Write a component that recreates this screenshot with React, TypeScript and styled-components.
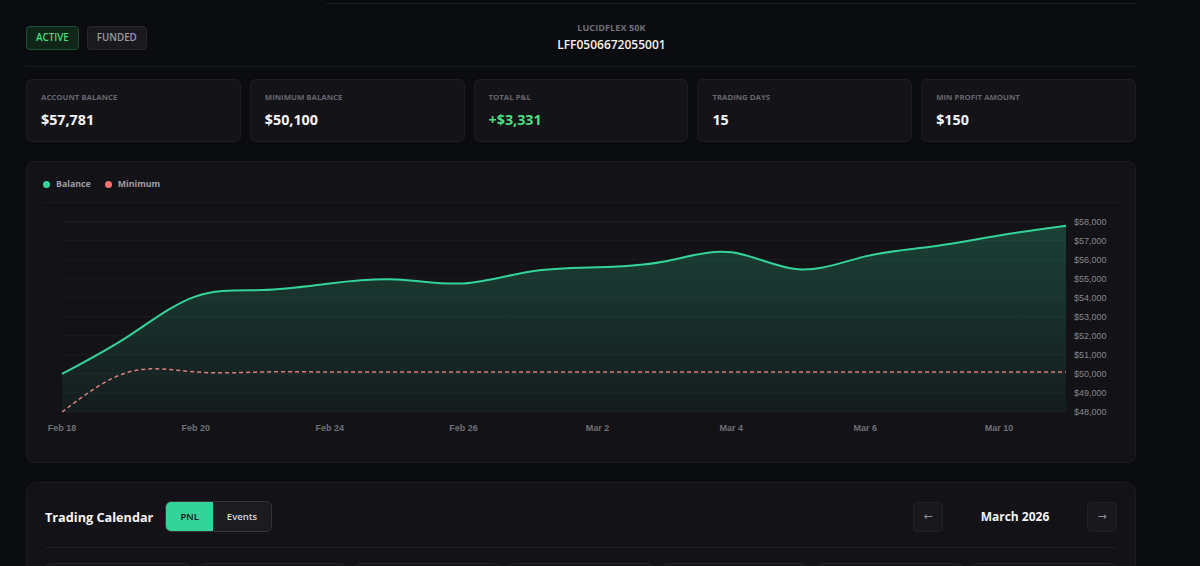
import React from 'react';
import styled, { createGlobalStyle } from 'styled-components';

const GlobalStyle = createGlobalStyle`
  * { box-sizing: border-box; }
  html, body {
    margin: 0;
    background: #0b0c10;
  }
  body {
    font-family: 'Open Sans', 'Noto Sans', sans-serif;
    color: #f4f4f5;
    overflow: hidden;
  }
`;

const Page = styled.div`
  width: 1136px;
  padding-left: 26px;
`;

const TopRule = styled.div`
  height: 4px;
  background: linear-gradient(to right, transparent 27%, #1a1b20 27%) bottom / 100% 1px no-repeat;
`;

const Header = styled.header`
  display: flex;
  align-items: center;
  justify-content: space-between;
  padding: 18px 0 13px;
  border-bottom: 1px solid #17181d;
`;

const BadgeGroup = styled.div`
  display: flex;
  gap: 8px;
`;

const Badge = styled.span<{ $active?: boolean }>`
  display: inline-flex;
  align-items: center;
  height: 24px;
  padding: 0 9px;
  border-radius: 4px;
  font-size: 9.8px;
  font-weight: 600;
  background: ${p => (p.$active ? '#0f2619' : '#1a1a1e')};
  border: 1px solid ${p => (p.$active ? '#1d5134' : '#26262b')};
  color: ${p => (p.$active ? '#4ade80' : '#9b9ba1')};
`;

const TitleBlock = styled.div`
  display: flex;
  flex-direction: column;
  align-items: center;
  gap: 3px;
`;

const AccountType = styled.div`
  font-size: 9px;
  line-height: 12px;
  font-weight: 700;
  letter-spacing: 0.1px;
  color: #707076;
`;

const AccountId = styled.div`
  font-size: 12px;
  line-height: 16px;
  font-weight: 600;
  color: #f4f4f5;
`;

const HeaderSpacer = styled.div`
  width: 60px;
`;

const StatRow = styled.section`
  display: grid;
  grid-template-columns: repeat(5, 1fr);
  gap: 9px;
  margin-top: 12px;
`;

const StatCard = styled.div`
  background: #141418;
  border: 1px solid #1c1c21;
  border-radius: 6px;
  padding: 12px 14px 11px;
  display: flex;
  flex-direction: column;
  gap: 8px;
`;

const StatLabel = styled.div`
  font-size: 7.8px;
  line-height: 10px;
  font-weight: 700;
  text-transform: uppercase;
  color: #66666d;
`;

const StatValue = styled.div<{ $positive?: boolean }>`
  font-size: 14.3px;
  line-height: 20px;
  font-weight: 700;
  color: ${p => (p.$positive ? '#4ade80' : '#f7f7f8')};
`;

const ChartCard = styled.section`
  margin-top: 19px;
  background: #131317;
  border: 1px solid #1c1c21;
  border-radius: 8px;
  padding: 17px 16px 15px;
`;

const Legend = styled.div`
  display: flex;
  align-items: center;
  gap: 14px;
  height: 10px;
  margin-bottom: 8px;
`;

const LegendItem = styled.div`
  display: flex;
  align-items: center;
  gap: 6px;
  font-size: 8.8px;
  font-weight: 700;
  color: #9d9da4;
`;

const Dot = styled.span<{ $color: string }>`
  width: 7px;
  height: 7px;
  border-radius: 50%;
  background: ${p => p.$color};
`;

const ChartSvg = styled.svg`
  display: block;
`;

const CalendarCard = styled.section`
  margin-top: 19px;
  background: #131317;
  border: 1px solid #1c1c21;
  border-radius: 10px;
  padding: 18px 18px 0;
`;

const CalendarHeader = styled.div`
  display: flex;
  align-items: center;
  justify-content: space-between;
  padding-bottom: 15px;
  border-bottom: 1px solid #1d1d22;
`;

const HeaderLeft = styled.div`
  display: flex;
  align-items: center;
  gap: 12px;
`;

const CalendarTitle = styled.h2`
  margin: 0;
  font-size: 12.7px;
  font-weight: 700;
  color: #f7f7f8;
`;

const Toggle = styled.div`
  display: flex;
  height: 31px;
  border: 1px solid #34343a;
  border-radius: 6px;
  overflow: hidden;
  background: #1c1c20;
`;

const ToggleButton = styled.button<{ $active?: boolean }>`
  border: none;
  padding: 0 14px;
  font-family: inherit;
  font-size: 9.5px;
  font-weight: 600;
  background: ${p => (p.$active ? '#34d399' : 'transparent')};
  color: ${p => (p.$active ? '#0b1510' : '#d4d4d8')};
`;

const MonthNav = styled.div`
  display: flex;
  align-items: center;
`;

const NavButton = styled.button`
  width: 30px;
  height: 30px;
  border: 1px solid #1f1f24;
  border-radius: 4px;
  background: #19191d;
  color: #8d8d93;
  font-size: 11px;
  font-family: 'DejaVu Sans', sans-serif;
  display: flex;
  align-items: center;
  justify-content: center;
  padding: 0;
`;

const MonthLabel = styled.div`
  width: 144px;
  text-align: center;
  font-size: 12px;
  font-weight: 700;
  color: #f4f4f5;
`;

const DayGrid = styled.div`
  display: grid;
  grid-template-columns: repeat(7, 1fr);
  gap: 8px;
  margin-top: 15px;
`;

const DayCell = styled.div`
  height: 80px;
  background: #17171b;
  border: 1px solid #212126;
  border-radius: 6px;
`;

// chart geometry
const W = 1078;
const H = 250;
const PLOT_L = 19;
const PLOT_R = 1023;
const Y_TOP = 24.5;
const Y_BOT = 215;
const V_MIN = 48000;
const V_MAX = 58000;

const dates = [
  'Feb 18', 'Feb 19', 'Feb 20', 'Feb 23', 'Feb 24', 'Feb 25', 'Feb 26', 'Feb 27',
  'Mar 2', 'Mar 3', 'Mar 4', 'Mar 5', 'Mar 6', 'Mar 9', 'Mar 10', 'Mar 11',
];
const balance = [
  50000, 52000, 54070, 54400, 54750, 54960, 54750, 55380,
  55600, 55900, 56380, 55490, 56170, 56690, 57270, 57781,
];
const minimum = [48000, 50100, 50100, 50100, 50100, 50100, 50100, 50100, 50100, 50100, 50100, 50100, 50100, 50100, 50100, 50100];

const xOf = (i: number) => PLOT_L + ((PLOT_R - PLOT_L) * i) / (dates.length - 1);
const yOf = (v: number) => Y_BOT - ((v - V_MIN) / (V_MAX - V_MIN)) * (Y_BOT - Y_TOP);

// natural cubic spline control points, same as d3 curveNatural
function controlPoints(x: number[]): [number[], number[]] {
  const n = x.length - 1;
  const a = new Array(n);
  const b = new Array(n);
  const r = new Array(n);
  a[0] = 0; b[0] = 2; r[0] = x[0] + 2 * x[1];
  for (let i = 1; i < n - 1; ++i) { a[i] = 1; b[i] = 4; r[i] = 4 * x[i] + 2 * x[i + 1]; }
  a[n - 1] = 2; b[n - 1] = 7; r[n - 1] = 8 * x[n - 1] + x[n];
  for (let i = 1; i < n; ++i) {
    const m = a[i] / b[i - 1];
    b[i] -= m;
    r[i] -= m * r[i - 1];
  }
  a[n - 1] = r[n - 1] / b[n - 1];
  for (let i = n - 2; i >= 0; --i) a[i] = (r[i] - a[i + 1]) / b[i];
  b[n - 1] = (x[n] + a[n - 1]) / 2;
  for (let i = 0; i < n - 1; ++i) b[i] = 2 * x[i + 1] - a[i + 1];
  return [a, b];
}

function naturalPath(values: number[]) {
  const xs = values.map((_, i) => xOf(i));
  const ys = values.map(yOf);
  const [ax, bx] = controlPoints(xs);
  const [ay, by] = controlPoints(ys);
  let d = `M${xs[0]},${ys[0]}`;
  for (let i = 0; i < xs.length - 1; i++) {
    d += ` C${ax[i]},${ay[i]} ${bx[i]},${by[i]} ${xs[i + 1]},${ys[i + 1]}`;
  }
  return d;
}

const stats = [
  { label: 'Account Balance', value: '$57,781' },
  { label: 'Minimum Balance', value: '$50,100' },
  { label: 'Total P&L', value: '+$3,331', positive: true },
  { label: 'Trading Days', value: '15' },
  { label: 'Min Profit Amount', value: '$150' },
];

const BalanceChart: React.FC = () => {
  const balancePath = naturalPath(balance);
  const minPath = naturalPath(minimum);
  const areaPath = `${balancePath} L${PLOT_R},${Y_BOT} L${PLOT_L},${Y_BOT} Z`;
  const ticks = Array.from({ length: 11 }, (_, i) => V_MIN + i * 1000);

  return (
    <ChartSvg width={W} height={H} viewBox={`0 0 ${W} ${H}`}>
      <defs>
        <linearGradient id="balFill" x1="0" y1={Y_TOP} x2="0" y2={Y_BOT} gradientUnits="userSpaceOnUse">
          <stop offset="0%" stopColor="#34d399" stopOpacity={0.24} />
          <stop offset="100%" stopColor="#34d399" stopOpacity={0.05} />
        </linearGradient>
      </defs>
      <line x1={0} x2={W} y1={5.5} y2={5.5} stroke="#1a1a1f" />
      {ticks.map(t => (
        <line key={t} x1={PLOT_L} x2={PLOT_R} y1={yOf(t)} y2={yOf(t)} stroke="#1c1d22" />
      ))}
      <path d={areaPath} fill="url(#balFill)" />
      <path d={minPath} fill="none" stroke="#f08a8a" strokeWidth={1.5} strokeDasharray="4 3" opacity={0.9} />
      <path d={balancePath} fill="none" stroke="#34d399" strokeWidth={2} />
      {ticks.map(t => (
        <text
          key={t}
          x={1031}
          y={yOf(t) + 3}
          fontFamily="'Liberation Sans', Arial, sans-serif"
          fontSize={9}
          fill="#85858b"
        >
          ${t.toLocaleString('en-US')}
        </text>
      ))}
      {dates.map((d, i) =>
        i % 2 === 0 && i < 15 ? (
          <text
            key={d}
            x={xOf(i)}
            y={234}
            textAnchor="middle"
            fontFamily="'Liberation Sans', Arial, sans-serif"
            fontSize={9}
            fontWeight={700}
            fill="#6f6f75"
          >
            {d}
          </text>
        ) : null
      )}
    </ChartSvg>
  );
};

const App: React.FC = () => {
  return (
    <>
      <GlobalStyle />
      <Page>
        <TopRule />
        <Header>
          <BadgeGroup>
            <Badge $active>ACTIVE</Badge>
            <Badge>FUNDED</Badge>
          </BadgeGroup>
          <TitleBlock>
            <AccountType>LUCIDFLEX 50K</AccountType>
            <AccountId>LFF0506672055001</AccountId>
          </TitleBlock>
          <HeaderSpacer />
        </Header>

        <StatRow>
          {stats.map(s => (
            <StatCard key={s.label}>
              <StatLabel>{s.label}</StatLabel>
              <StatValue $positive={s.positive}>{s.value}</StatValue>
            </StatCard>
          ))}
        </StatRow>

        <ChartCard>
          <Legend>
            <LegendItem>
              <Dot $color="#34d399" />
              Balance
            </LegendItem>
            <LegendItem>
              <Dot $color="#f87171" />
              Minimum
            </LegendItem>
          </Legend>
          <BalanceChart />
        </ChartCard>

        <CalendarCard>
          <CalendarHeader>
            <HeaderLeft>
              <CalendarTitle>Trading Calendar</CalendarTitle>
              <Toggle>
                <ToggleButton $active>PNL</ToggleButton>
                <ToggleButton>Events</ToggleButton>
              </Toggle>
            </HeaderLeft>
            <MonthNav>
              <NavButton>←</NavButton>
              <MonthLabel>March 2026</MonthLabel>
              <NavButton>→</NavButton>
            </MonthNav>
          </CalendarHeader>
          <DayGrid>
            {Array.from({ length: 7 }, (_, i) => (
              <DayCell key={i} />
            ))}
          </DayGrid>
        </CalendarCard>
      </Page>
    </>
  );
};

export default App;
